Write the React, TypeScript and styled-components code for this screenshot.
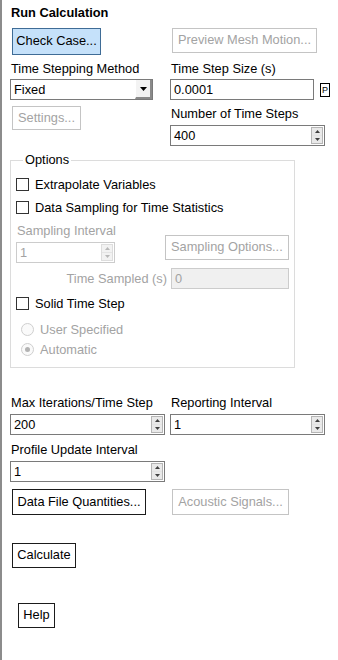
import React from "react";
import styled, { createGlobalStyle } from "styled-components";

const GlobalStyle = createGlobalStyle`
  html, body {
    margin: 0;
    padding: 0;
    background: #ffffff;
  }
  body {
    font-family: "Liberation Sans", Arial, sans-serif;
    font-size: 12.8px;
    color: #000000;
  }
`;

const Panel = styled.div`
  box-sizing: border-box;
  min-height: 660px;
  width: 338px;
  border-left: 2px solid #8c8c8c;
  padding: 4px 0 0 8px;
  display: flex;
  flex-direction: column;
  align-items: flex-start;
`;

const Title = styled.div`
  font-weight: bold;
  line-height: 15px;
  padding-left: 1px;
  margin-top: 1px;
`;

const TwoCol = styled.div<{ $top: number }>`
  display: grid;
  grid-template-columns: 160px 160px;
  margin-top: ${(p) => p.$top}px;
  align-items: start;
`;

const Col = styled.div`
  display: flex;
  flex-direction: column;
  align-items: flex-start;
`;

const Label = styled.div<{ $top?: number; $disabled?: boolean }>`
  line-height: 15px;
  height: 15px;
  white-space: nowrap;
  padding-left: 1px;
  margin-top: ${(p) => p.$top ?? 0}px;
  color: ${(p) => (p.$disabled ? "#a3a3a3" : "#000000")};
`;

const Button = styled.button<{
  $w: number;
  $h: number;
  $left?: number;
  $top?: number;
  $variant?: "normal" | "focus" | "disabled";
}>`
  box-sizing: border-box;
  width: ${(p) => p.$w}px;
  height: ${(p) => p.$h}px;
  margin: ${(p) => p.$top ?? 0}px 0 0 ${(p) => p.$left ?? 2}px;
  padding: 0;
  font: inherit;
  line-height: 1;
  white-space: nowrap;
  text-align: center;
  background: ${(p) => (p.$variant === "focus" ? "#c5e1fa" : "#ffffff")};
  border: 1px solid
    ${(p) =>
      p.$variant === "focus"
        ? "#3f6c96"
        : p.$variant === "disabled"
        ? "#c4c4c4"
        : "#1b1b1b"};
  color: ${(p) => (p.$variant === "disabled" ? "#a3a3a3" : "#000000")};
`;

const Field = styled.div<{
  $w: number;
  $top?: number;
  $disabled?: boolean;
  $shaded?: boolean;
}>`
  box-sizing: border-box;
  position: relative;
  width: ${(p) => p.$w}px;
  height: 21px;
  margin-top: ${(p) => p.$top ?? 0}px;
  border: 1px solid ${(p) => (p.$disabled ? "#cccccc" : "#7a7a7a")};
  background: ${(p) => (p.$shaded ? "#f0f0f0" : "#ffffff")};
  color: ${(p) => (p.$disabled ? "#a3a3a3" : "#000000")};
  display: flex;
  align-items: center;
  padding-left: 3px;
  line-height: 15px;
`;

const SpinBox = styled.div<{ $disabled?: boolean }>`
  position: absolute;
  top: 1px;
  right: 1px;
  bottom: 1px;
  width: 12px;
  display: flex;
  flex-direction: column;
  border: 1px solid ${(p) => (p.$disabled ? "#dddddd" : "#b5b5b5")};
  box-sizing: border-box;
`;

const SpinHalf = styled.div<{ $disabled?: boolean }>`
  flex: 1;
  display: flex;
  align-items: center;
  justify-content: center;
  background: ${(p) => (p.$disabled ? "#f2f2f2" : "#e9e9e9")};
  & + & {
    border-top: 1px solid ${(p) => (p.$disabled ? "#e4e4e4" : "#c8c8c8")};
  }
`;

const Arrow = ({ up, color }: { up: boolean; color: string }) => (
  <svg width="5" height="3" viewBox="0 0 5 3">
    <polygon points={up ? "0,3 5,3 2.5,0" : "0,0 5,0 2.5,3"} fill={color} />
  </svg>
);

const Spinner = ({ disabled }: { disabled?: boolean }) => {
  const c = disabled ? "#b8b8b8" : "#404040";
  return (
    <SpinBox $disabled={disabled}>
      <SpinHalf $disabled={disabled}>
        <Arrow up color={c} />
      </SpinHalf>
      <SpinHalf $disabled={disabled}>
        <Arrow up={false} color={c} />
      </SpinHalf>
    </SpinBox>
  );
};

const Select = styled.div`
  box-sizing: border-box;
  width: 143px;
  height: 21px;
  margin-top: 3px;
  border: 1px solid #7a7a7a;
  display: flex;
  align-items: stretch;
  padding-left: 3px;
  background: #ffffff;
`;

const SelectText = styled.span`
  flex: 1;
  display: flex;
  align-items: center;
`;

const SelectArrow = styled.div`
  width: 14px;
  display: flex;
  align-items: center;
  justify-content: center;
  background: #f3f3f3;
  border-right: 2px solid #8a8a8a;
  border-bottom: 2px solid #8a8a8a;
  border-left: 1px solid #ffffff;
`;

const InputRow = styled.div`
  display: flex;
  align-items: center;
  gap: 6px;
  margin-top: 3px;
`;

const PBox = styled.div`
  box-sizing: border-box;
  width: 10px;
  height: 14px;
  border: 1px solid #000000;
  font-size: 9px;
  line-height: 12px;
  text-align: center;
`;

const Options = styled.fieldset`
  box-sizing: border-box;
  width: 285px;
  margin: 0;
  margin-top: 6px;
  padding: 0 5px 8px 5px;
  border: 1px solid #dcdcdc;
  min-width: 0;
`;

const Legend = styled.legend`
  padding: 0 2px;
  margin-left: 7px;
  line-height: 16px;
`;

const CheckRow = styled.label<{ $top: number; $indent?: number; $disabled?: boolean }>`
  display: flex;
  align-items: center;
  gap: 6px;
  height: 20px;
  margin-top: ${(p) => p.$top}px;
  padding-left: ${(p) => p.$indent ?? 0}px;
  color: ${(p) => (p.$disabled ? "#a3a3a3" : "#000000")};
  white-space: nowrap;
`;

const CheckBox = styled.span`
  box-sizing: border-box;
  width: 13px;
  height: 13px;
  border: 1px solid #333333;
  background: #ffffff;
`;

const Radio = styled.span<{ $checked?: boolean }>`
  box-sizing: border-box;
  width: 13px;
  height: 13px;
  border-radius: 50%;
  border: 1px solid #cfcfcf;
  background: #fafafa;
  display: flex;
  align-items: center;
  justify-content: center;
  &::after {
    content: "";
    width: 5px;
    height: 5px;
    border-radius: 50%;
    background: ${(p) => (p.$checked ? "#b3b3b3" : "transparent")};
  }
`;

const SamplingRow = styled.div`
  display: flex;
  align-items: flex-end;
  margin-top: 6px;
`;

const TimeSampledRow = styled.div`
  display: flex;
  align-items: center;
  justify-content: flex-end;
  gap: 4px;
  margin-top: 5px;
`;

const FieldGrid = styled.div<{ $top: number }>`
  display: grid;
  grid-template-columns: 155px 155px;
  column-gap: 5px;
  margin-top: ${(p) => p.$top}px;
`;

export default function App(): JSX.Element {
  return (
    <>
      <GlobalStyle />
      <Panel>
        <Title>Run Calculation</Title>

        <TwoCol $top={8}>
          <Button $w={89} $h={27} $variant="focus">
            Check Case...
          </Button>
          <Button $w={145} $h={25} $variant="disabled">
            Preview Mesh Motion...
          </Button>
        </TwoCol>

        <TwoCol $top={6}>
          <Col>
            <Label>Time Stepping Method</Label>
            <Select>
              <SelectText>Fixed</SelectText>
              <SelectArrow>
                <svg width="7" height="4" viewBox="0 0 7 4">
                  <polygon points="0,0 7,0 3.5,4" fill="#000000" />
                </svg>
              </SelectArrow>
            </Select>
            <Button $w={69} $h={24} $top={6} $variant="disabled">
              Settings...
            </Button>
          </Col>
          <Col>
            <Label>Time Step Size (s)</Label>
            <InputRow>
              <Field $w={144}>0.0001</Field>
              <PBox>P</PBox>
            </InputRow>
            <Label $top={6}>Number of Time Steps</Label>
            <Field $w={155} $top={4}>
              400
              <Spinner />
            </Field>
          </Col>
        </TwoCol>

        <Options>
          <Legend>Options</Legend>
          <CheckRow $top={6}>
            <CheckBox />
            Extrapolate Variables
          </CheckRow>
          <CheckRow $top={3}>
            <CheckBox />
            Data Sampling for Time Statistics
          </CheckRow>
          <SamplingRow>
            <Col>
              <Label $disabled>Sampling Interval</Label>
              <Field $w={99} $top={4} $disabled>
                1
                <Spinner disabled />
              </Field>
            </Col>
            <Button
              $w={124}
              $h={25}
              $left={49}
              $variant="disabled"
              style={{ marginBottom: 3 }}
            >
              Sampling Options...
            </Button>
          </SamplingRow>
          <TimeSampledRow>
            <Label $disabled>Time Sampled (s)</Label>
            <Field $w={118} $disabled $shaded>
              0
            </Field>
          </TimeSampledRow>
          <CheckRow $top={4}>
            <CheckBox />
            Solid Time Step
          </CheckRow>
          <CheckRow $top={6} $indent={5} $disabled>
            <Radio />
            User Specified
          </CheckRow>
          <CheckRow $top={0} $indent={5} $disabled>
            <Radio $checked />
            Automatic
          </CheckRow>
        </Options>

        <FieldGrid $top={27}>
          <Col>
            <Label>Max Iterations/Time Step</Label>
            <Field $w={155} $top={4}>
              200
              <Spinner />
            </Field>
            <Label $top={7}>Profile Update Interval</Label>
            <Field $w={155} $top={4}>
              1
              <Spinner />
            </Field>
          </Col>
          <Col>
            <Label>Reporting Interval</Label>
            <Field $w={155} $top={4}>
              1
              <Spinner />
            </Field>
          </Col>
        </FieldGrid>

        <TwoCol $top={7}>
          <Button $w={134} $h={26}>
            Data File Quantities...
          </Button>
          <Button $w={117} $h={26} $variant="disabled">
            Acoustic Signals...
          </Button>
        </TwoCol>

        <Button $w={64} $h={25} $top={28}>
          Calculate
        </Button>

        <Button $w={37} $h={25} $top={35} $left={8}>
          Help
        </Button>
      </Panel>
    </>
  );
}
